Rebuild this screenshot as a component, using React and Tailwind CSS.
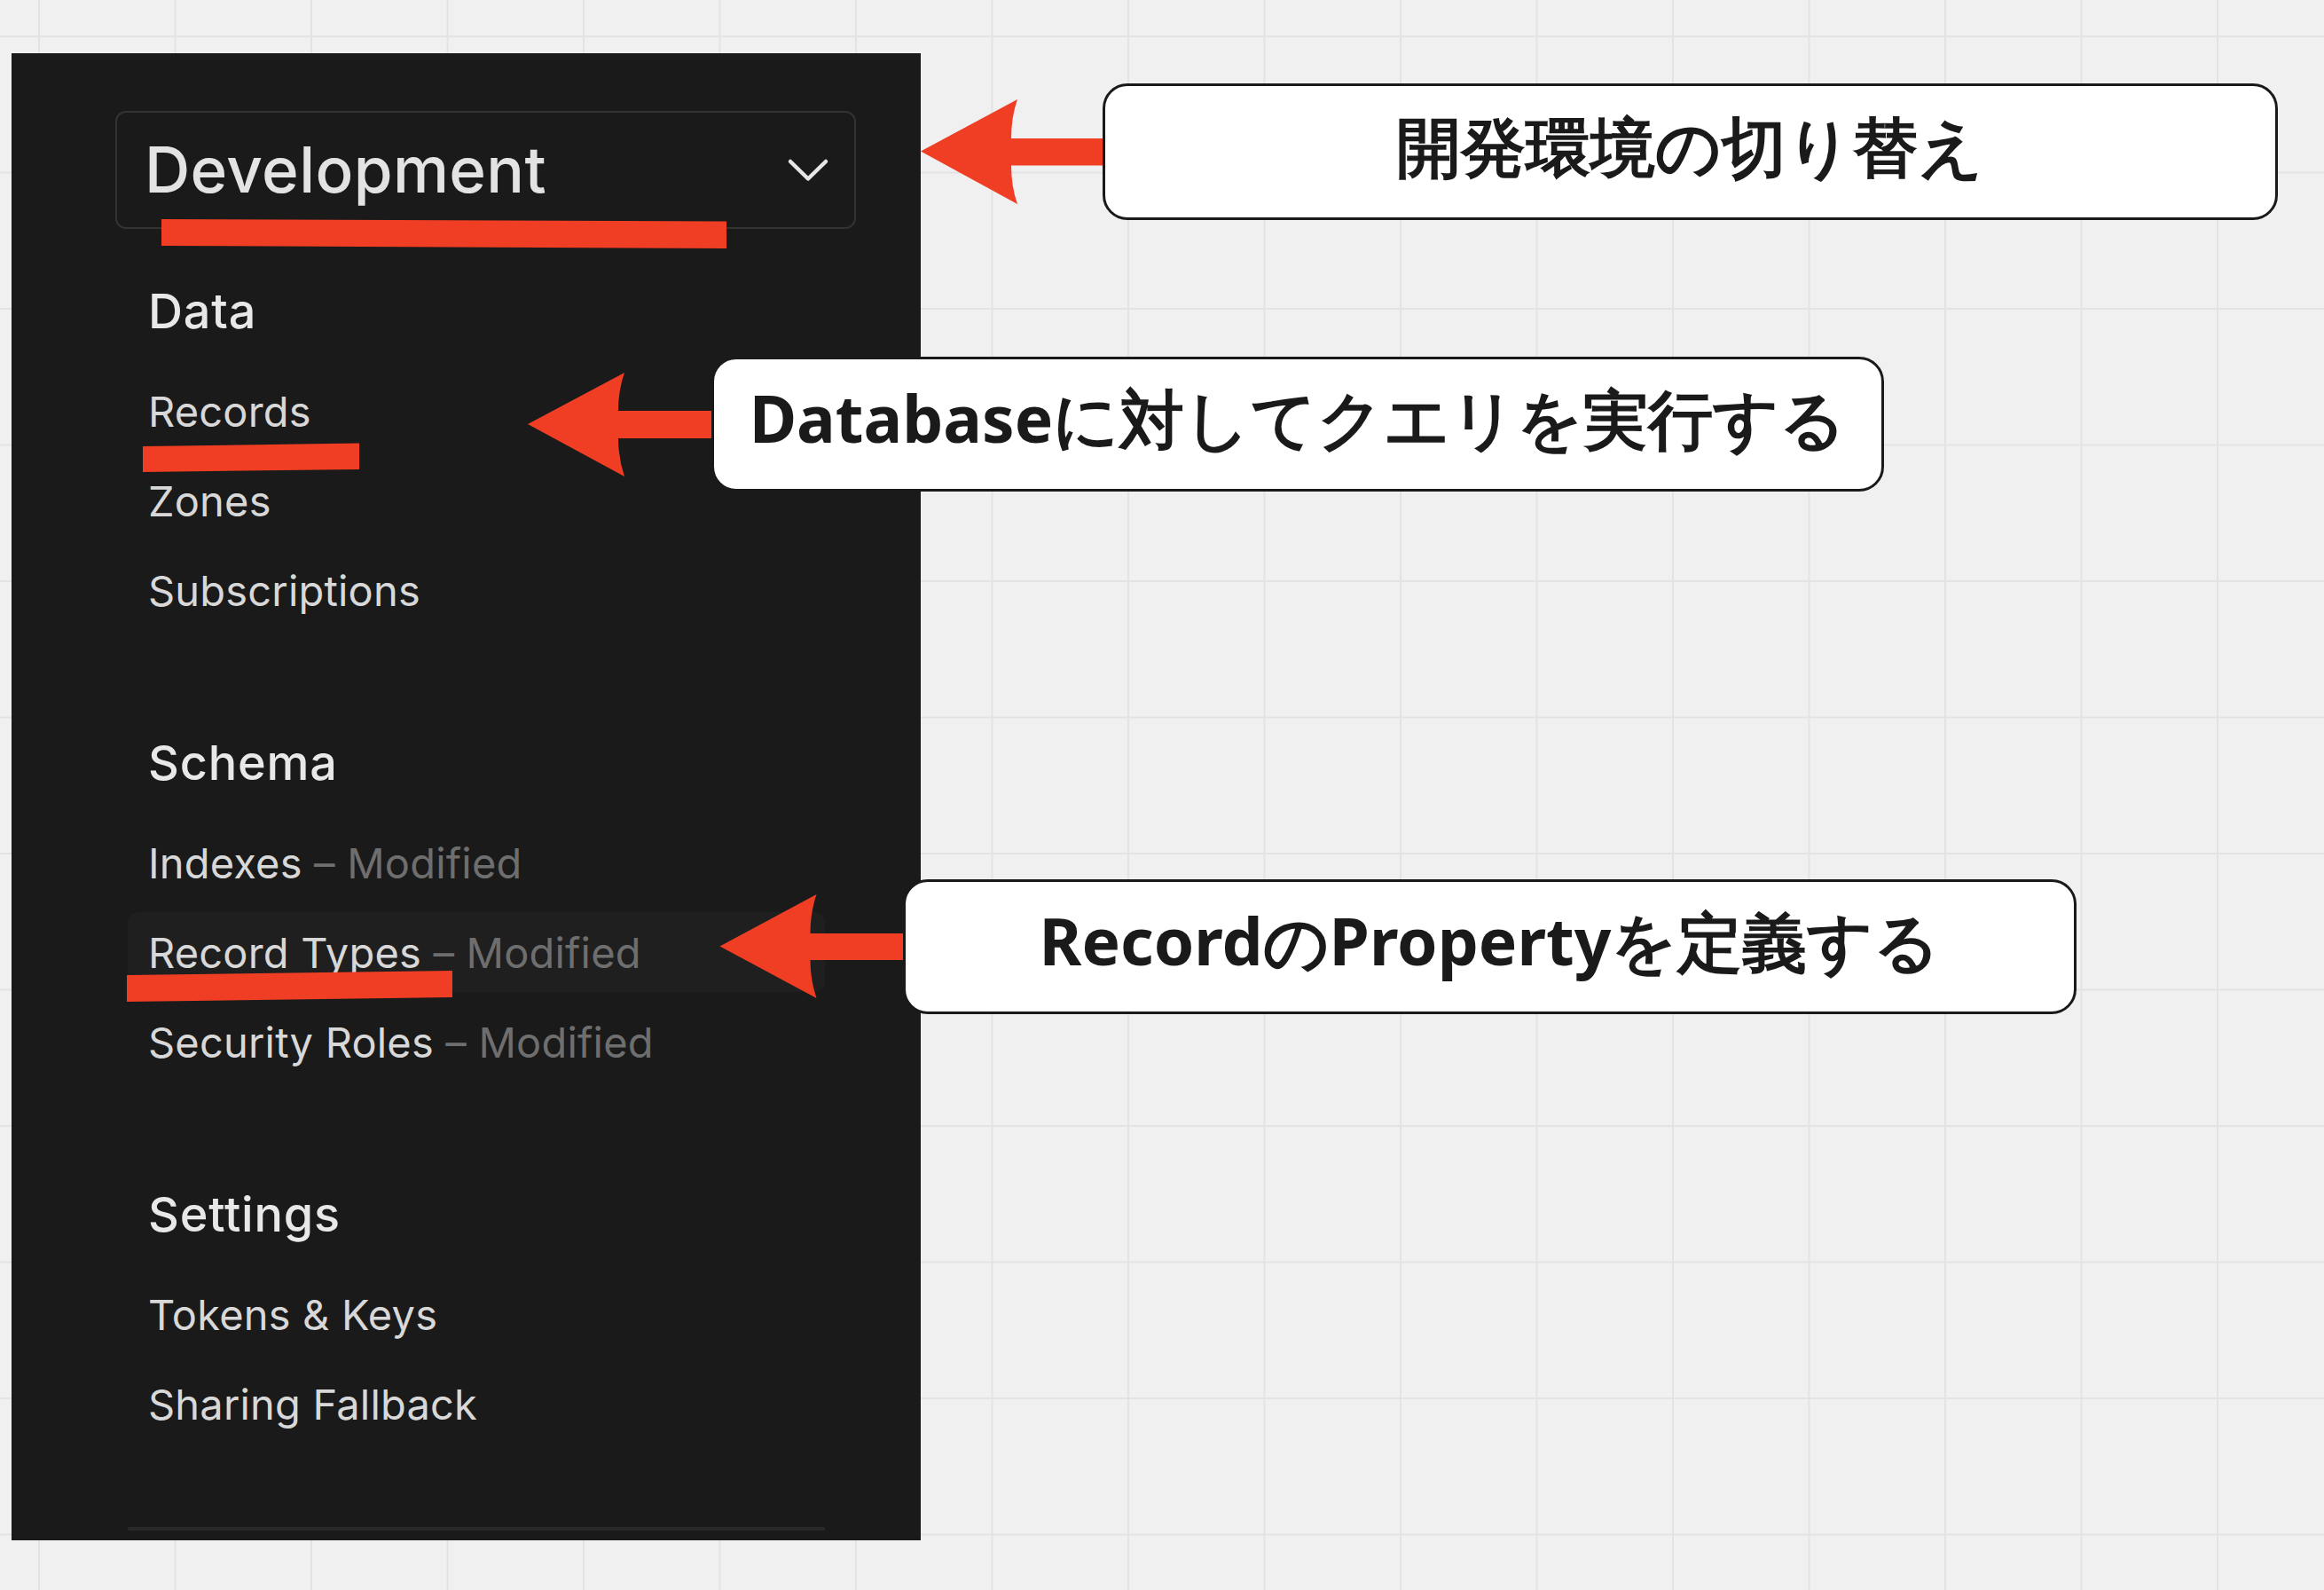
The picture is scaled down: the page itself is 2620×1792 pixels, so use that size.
import { ChevronDown } from 'lucide-react'

const groups = [
  {
    title: 'Data',
    items: [{ label: 'Records' }, { label: 'Zones' }, { label: 'Subscriptions' }],
  },
  {
    title: 'Schema',
    items: [
      { label: 'Indexes', note: 'Modified' },
      { label: 'Record Types', note: 'Modified', active: true },
      { label: 'Security Roles', note: 'Modified' },
    ],
  },
  {
    title: 'Settings',
    items: [{ label: 'Tokens & Keys' }, { label: 'Sharing Fallback' }],
  },
]

function NavItem({ label, note, active }) {
  return (
    <div
      className={
        active
          ? 'h-[90px] flex items-center pl-[23px] rounded-[12px] bg-[#1f1f1f] text-[47px] tracking-[0.004em] leading-none text-[#d8d8d8]'
          : 'h-[90px] flex items-center pl-[23px] rounded-[12px] text-[47px] tracking-[0.004em] leading-none text-[#d8d8d8]'
      }
    >
      <span className="whitespace-pre">{label}</span>
      {note && <span className="whitespace-pre text-[#6e6e6e]"> – {note}</span>}
    </div>
  )
}

function Sidebar() {
  return (
    <div className="w-[1025px] h-[1676px] bg-[#1a1a1a] flex flex-col font-['Inter',sans-serif]">
      <div className="mt-[65px] ml-[117px] w-[835px] h-[133px] shrink-0 border-2 border-[#333333] rounded-[12px] flex items-center justify-between pl-[31px] pr-[28px]">
        <span className="text-[71px] leading-none font-medium tracking-[0.005em] text-[#e3e3e3]">Development</span>
        <svg width="48" height="32" viewBox="0 0 48 32" fill="none">
          <path d="M4 6 L24 25.5 L44 6" stroke="#e6e6e6" strokeWidth="4.5" strokeLinecap="round" strokeLinejoin="round" />
        </svg>
      </div>

      <nav className="ml-[131px] w-[786px] mt-[48px] flex flex-col gap-[105px]">
        {groups.map((g) => (
          <div key={g.title} className="flex flex-col">
            <div className="h-[90px] flex items-center pl-[23px] text-[54px] tracking-[0.015em] leading-none font-medium text-[#e8e8e8]">
              {g.title}
            </div>
            <div className="mt-[22px] flex flex-col gap-[11px]">
              {g.items.map((it) => (
                <NavItem key={it.label} {...it} />
              ))}
            </div>
          </div>
        ))}
      </nav>

      <div className="ml-[131px] w-[786px] mt-[94px] h-[4px] rounded-full bg-[#2a2a2a]"></div>
    </div>
  )
}

function Marks() {
  // red annotation arrows and underlines drawn over the screenshot
  return (
    <svg className="absolute left-0 top-0 pointer-events-none" width="2620" height="1792" viewBox="0 0 2620 1792">
      <g fill="#ef3e23">
        <polygon points="182,247 819,249.5 819,280 182,277" />
        <polygon points="161,503 405,499.5 405,529 161,532" />
        <polygon points="143,1099 510,1094 510,1124 143,1129" />
        <path d="M1038 170.5 L1147 112 Q1140 132 1140 156 L1244 156 L1244 186.5 L1140 186.5 Q1140 210 1147 230 Z" />
        <path d="M595 478 L704 420 Q697 440 697 463 L805 463 L805 494 L697 494 Q697 516 704 537 Z" />
        <path d="M811.5 1066.5 L920.5 1008 Q913.5 1029 913.5 1052 L1021 1052 L1021 1082 L913.5 1082 Q913.5 1104 920.5 1125 Z" />
      </g>
    </svg>
  )
}

function Callout({ className, children }) {
  return (
    <div
      className={
        'absolute bg-white border-[3px] border-[#1a1a1a] rounded-[28px] flex items-center justify-center pb-4 text-[73px] leading-none font-bold text-[#1a1a1a] whitespace-nowrap font-[\'Noto_Sans\',\'Noto_Sans_CJK_JP\',sans-serif] ' +
        className
      }
    >
      {children}
    </div>
  )
}

export default function App() {
  return (
    <div className="relative w-[2620px] h-[1792px] overflow-hidden bg-[#f0f0f0] pt-[60px] pl-[13px] [background-image:linear-gradient(to_right,#e3e3e3_2px,transparent_2px),linear-gradient(to_bottom,#e3e3e3_2px,transparent_2px)] [background-size:153.5px_153.5px] [background-position:43px_40px]">
      <Sidebar />
      <Marks />
      <Callout className="left-[1243px] top-[94px] w-[1325px] h-[154px]">開発環境の切り替え</Callout>
      <Callout className="left-[802px] top-[402px] w-[1322px] h-[152px]">Databaseに対してクエリを実行する</Callout>
      <Callout className="left-[1018px] top-[991px] w-[1323px] h-[152px]">RecordのPropertyを定義する</Callout>
    </div>
  )
}
